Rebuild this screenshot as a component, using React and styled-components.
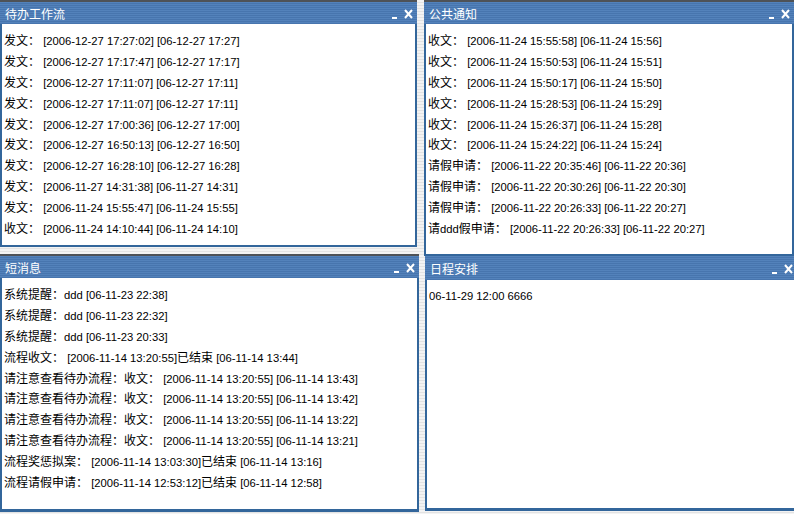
import React from "react";
import styled, { createGlobalStyle } from "styled-components";

const GlobalStyle = createGlobalStyle`
    html, body {
        margin: 0;
        padding: 0;
        overflow: hidden;
        background: repeating-linear-gradient(to bottom, #f3f3f3 0 2px, #e3e3e3 2px 3px);
    }
`;

// 전체 화면: 왼쪽/오른쪽 두 열
const Page = styled.div`
    width: 794px;
    height: 514px;
    display: flex;
    overflow: hidden;
`;

const Column = styled.div`
    display: flex;
    flex-direction: column;
    flex: none;
    width: ${(p) => p.$width}px;
    margin-left: ${(p) => p.$offset || 0}px;
    gap: ${(p) => p.$gap || 0}px;
`;

const Panel = styled.div`
    display: flex;
    flex-direction: column;
    flex: none;
    width: ${(p) => p.$width}px;
    height: ${(p) => p.$height}px;
    margin-left: ${(p) => p.$shift || 0}px;
`;

const TitleBar = styled.div`
    height: ${(p) => (p.$dark ? 22 : 24)}px;
    border-top: ${(p) => (p.$dark ? "2px solid #4e5257" : "none")};
    display: flex;
    align-items: center;
    padding: 0 4px 0 5px;
    background: repeating-linear-gradient(to bottom, #5382bb 0 1px, #4775ae 1px 2px);
    color: #ffffff;
    font-family: "Noto Sans CJK SC", "Liberation Sans", sans-serif;
    font-size: 12px;
`;

const TitleText = styled.span`
    flex: 1;
    padding-top: 1px;
`;

const Controls = styled.div`
    display: flex;
    align-items: flex-end;
    gap: 7px;
    padding-top: 1px;
`;

const Body = styled.div`
    flex: 1;
    background: #ffffff;
    border: 2px solid #33669b;
    border-top: none;
    border-bottom-width: ${(p) => p.$bottom || 2}px;
    padding: 6px 2px 0 2px;
    overflow: hidden;
`;

const Row = styled.div`
    height: 20.9px;
    line-height: 20.9px;
    white-space: nowrap;
    color: #000000;
    font-family: "Liberation Sans", "Noto Sans CJK SC", sans-serif;
    font-size: 11.25px;
`;

const Han = styled.span`
    font-family: "Noto Sans CJK SC", sans-serif;
    font-size: 12px;
`;

const MinIcon = () => (
    <svg width="5" height="10" viewBox="0 0 5 10">
        <rect x="0" y="8" width="5" height="2" fill="#ffffff" />
    </svg>
);

const CloseIcon = () => (
    <svg width="9" height="10" viewBox="0 0 9 10">
        <path d="M1 1 L8 9 M8 1 L1 9" stroke="#ffffff" strokeWidth="2" fill="none" />
    </svg>
);

// 한자 구간만 12px로 렌더링
const Mixed = ({ text }) =>
    text.split(/([\u3000-\u9fff\uff00-\uffef]+)/).map((part, i) =>
        /[\u3000-\u9fff\uff00-\uffef]/.test(part) ? <Han key={i}>{part}</Han> : part
    );

const Window = ({ title, rows, width, height, dark = true, shift, bottom }) => (
    <Panel $width={width} $height={height} $shift={shift}>
        <TitleBar $dark={dark}>
            <TitleText>{title}</TitleText>
            <Controls>
                <MinIcon />
                <CloseIcon />
            </Controls>
        </TitleBar>
        <Body $bottom={bottom}>
            {rows.map((r, i) => (
                <Row key={i}>
                    <Mixed text={r} />
                </Row>
            ))}
        </Body>
    </Panel>
);

const todo = [
    "发文： [2006-12-27 17:27:02] [06-12-27 17:27]",
    "发文： [2006-12-27 17:17:47] [06-12-27 17:17]",
    "发文： [2006-12-27 17:11:07] [06-12-27 17:11]",
    "发文： [2006-12-27 17:11:07] [06-12-27 17:11]",
    "发文： [2006-12-27 17:00:36] [06-12-27 17:00]",
    "发文： [2006-12-27 16:50:13] [06-12-27 16:50]",
    "发文： [2006-12-27 16:28:10] [06-12-27 16:28]",
    "发文： [2006-11-27 14:31:38] [06-11-27 14:31]",
    "发文： [2006-11-24 15:55:47] [06-11-24 15:55]",
    "收文： [2006-11-24 14:10:44] [06-11-24 14:10]",
];

const notices = [
    "收文： [2006-11-24 15:55:58] [06-11-24 15:56]",
    "收文： [2006-11-24 15:50:53] [06-11-24 15:51]",
    "收文： [2006-11-24 15:50:17] [06-11-24 15:50]",
    "收文： [2006-11-24 15:28:53] [06-11-24 15:29]",
    "收文： [2006-11-24 15:26:37] [06-11-24 15:28]",
    "收文： [2006-11-24 15:24:22] [06-11-24 15:24]",
    "请假申请： [2006-11-22 20:35:46] [06-11-22 20:36]",
    "请假申请： [2006-11-22 20:30:26] [06-11-22 20:30]",
    "请假申请： [2006-11-22 20:26:33] [06-11-22 20:27]",
    "请ddd假申请： [2006-11-22 20:26:33] [06-11-22 20:27]",
];

const messages = [
    "系统提醒：ddd [06-11-23 22:38]",
    "系统提醒：ddd [06-11-23 22:32]",
    "系统提醒：ddd [06-11-23 20:33]",
    "流程收文： [2006-11-14 13:20:55]已结束 [06-11-14 13:44]",
    "请注意查看待办流程：收文： [2006-11-14 13:20:55] [06-11-14 13:43]",
    "请注意查看待办流程：收文： [2006-11-14 13:20:55] [06-11-14 13:42]",
    "请注意查看待办流程：收文： [2006-11-14 13:20:55] [06-11-14 13:22]",
    "请注意查看待办流程：收文： [2006-11-14 13:20:55] [06-11-14 13:21]",
    "流程奖惩拟案： [2006-11-14 13:03:30]已结束 [06-11-14 13:16]",
    "流程请假申请： [2006-11-14 12:53:12]已结束 [06-11-14 12:58]",
];

const schedule = ["06-11-29 12:00 6666"];

export default function App() {
    return (
        <>
            <GlobalStyle />
            <Page>
                <Column $width={419} $gap={7}>
                    <Window title="待办工作流" rows={todo} width={417} height={247} />
                    <Window title="短消息" rows={messages} width={419} height={258} bottom={3} />
                </Column>
                <Column $width={372} $offset={5}>
                    <Window title="公共通知" rows={notices} width={370} height={256} />
                    <Window
                        title="日程安排"
                        rows={schedule}
                        width={372}
                        height={255}
                        dark={false}
                        shift={1}
                        bottom={3}
                    />
                </Column>
            </Page>
        </>
    );
}
